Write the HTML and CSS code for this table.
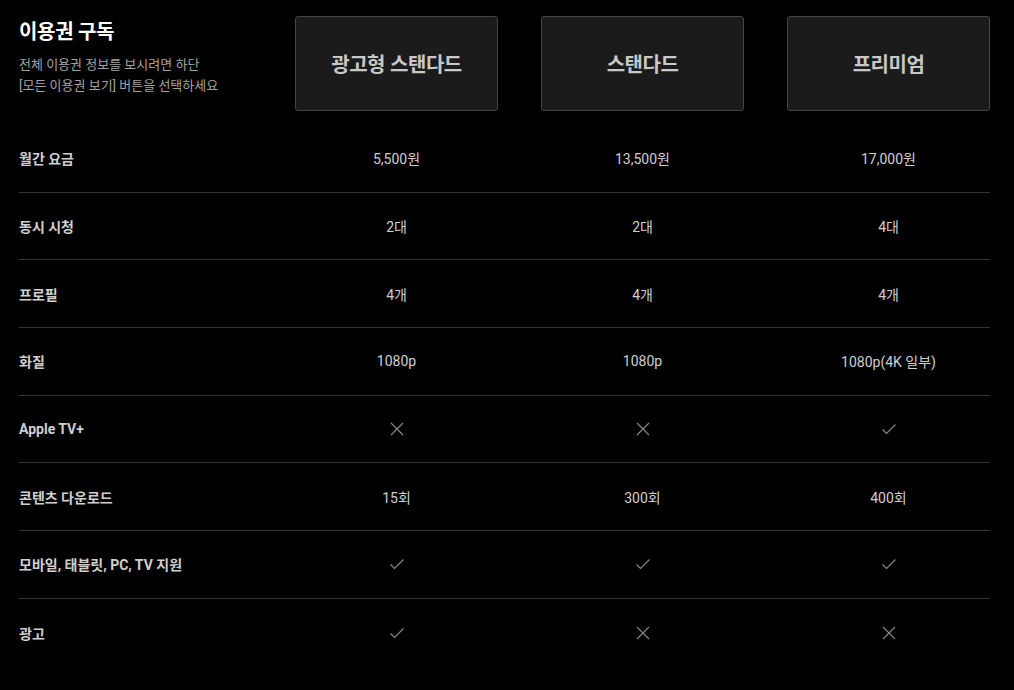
FILE: index.html
```
<!DOCTYPE html>
<html lang="ko">
<head>
    <meta charset="UTF-8">
    <meta name="viewport" content="width=device-width, initial-scale=1.0">
    <title>이용권 구독</title>
    <link rel="stylesheet" href="styles.css">
</head>
<body>
    <main class="plans">
        <div class="plans-head">
            <div class="plans-intro">
                <h1>이용권 구독</h1>
                <p>전체 이용권 정보를 보시려면 하단<br>[모든 이용권 보기] 버튼을 선택하세요</p>
            </div>
            <div class="plan-box">광고형 스탠다드</div>
            <div class="plan-box">스탠다드</div>
            <div class="plan-box">프리미엄</div>
        </div>

        <div class="plan-row">
            <div class="row-label">월간 요금</div>
            <div class="row-cell">5,500원</div>
            <div class="row-cell">13,500원</div>
            <div class="row-cell">17,000원</div>
        </div>
        <div class="plan-row">
            <div class="row-label">동시 시청</div>
            <div class="row-cell">2대</div>
            <div class="row-cell">2대</div>
            <div class="row-cell">4대</div>
        </div>
        <div class="plan-row">
            <div class="row-label">프로필</div>
            <div class="row-cell">4개</div>
            <div class="row-cell">4개</div>
            <div class="row-cell">4개</div>
        </div>
        <div class="plan-row">
            <div class="row-label">화질</div>
            <div class="row-cell">1080p</div>
            <div class="row-cell">1080p</div>
            <div class="row-cell">1080p(4K 일부)</div>
        </div>
        <div class="plan-row">
            <div class="row-label">Apple TV+</div>
            <div class="row-cell"><svg class="icon" viewBox="0 0 14 14"><path d="M1 1L13 13M13 1L1 13"/></svg></div>
            <div class="row-cell"><svg class="icon" viewBox="0 0 14 14"><path d="M1 1L13 13M13 1L1 13"/></svg></div>
            <div class="row-cell"><svg class="icon" viewBox="0 0 14 14"><path d="M0.5 7.5L4.5 11.5L13.5 2.5"/></svg></div>
        </div>
        <div class="plan-row">
            <div class="row-label">콘텐츠 다운로드</div>
            <div class="row-cell">15회</div>
            <div class="row-cell">300회</div>
            <div class="row-cell">400회</div>
        </div>
        <div class="plan-row">
            <div class="row-label">모바일, 태블릿, PC, TV 지원</div>
            <div class="row-cell"><svg class="icon" viewBox="0 0 14 14"><path d="M0.5 7.5L4.5 11.5L13.5 2.5"/></svg></div>
            <div class="row-cell"><svg class="icon" viewBox="0 0 14 14"><path d="M0.5 7.5L4.5 11.5L13.5 2.5"/></svg></div>
            <div class="row-cell"><svg class="icon" viewBox="0 0 14 14"><path d="M0.5 7.5L4.5 11.5L13.5 2.5"/></svg></div>
        </div>
        <div class="plan-row last">
            <div class="row-label">광고</div>
            <div class="row-cell"><svg class="icon" viewBox="0 0 14 14"><path d="M0.5 7.5L4.5 11.5L13.5 2.5"/></svg></div>
            <div class="row-cell"><svg class="icon" viewBox="0 0 14 14"><path d="M1 1L13 13M13 1L1 13"/></svg></div>
            <div class="row-cell"><svg class="icon" viewBox="0 0 14 14"><path d="M1 1L13 13M13 1L1 13"/></svg></div>
        </div>
    </main>
</body>
</html>
```

FILE: styles.css
```
:root {
    --color-bg: #000;
    --color-box: #1b1b1b;
    --color-box-border: #454545;
    --color-line: #333;
    --color-text: #cfcfcf;
    --color-muted: #a3a3a3;
    --color-icon: #8a8a8a;
}
* { box-sizing: border-box; margin: 0; padding: 0; }
body { background: var(--color-bg); color: var(--color-text); font-family: Roboto, 'Noto Sans CJK KR', sans-serif; }
.plans { width: 1014px; padding: 16px 24px 0 19px; }
.plans-head, .plan-row { display: grid; grid-template-columns: 233px repeat(3, 203px); column-gap: 43px; }
.plans-head { margin-bottom: 14px; }
.plans-intro h1 { font-size: 20px; font-weight: 700; color: #fff; line-height: 30px; margin-top: 1px; letter-spacing: -0.3px; }
.plans-intro p { font-size: 13px; color: var(--color-muted); line-height: 21px; margin-top: 7px; }
.plan-box { height: 95px; display: flex; align-items: center; justify-content: center; background: var(--color-box); border: 1px solid var(--color-box-border); border-radius: 3px; font-family: 'Noto Sans CJK KR', sans-serif; font-size: 20px; font-weight: 700; color: #c8c8c8; letter-spacing: -0.5px; }
.plan-row { height: 67.7px; align-items: center; border-bottom: 1px solid var(--color-line); }
.plan-row.last { border-bottom: none; }
.row-label { font-size: 14px; font-weight: 700; color: var(--color-text); }
.row-cell { font-size: 14px; text-align: center; color: var(--color-text); display: flex; justify-content: center; align-items: center; }
.icon { width: 14px; height: 14px; fill: none; stroke: var(--color-icon); stroke-width: 1.1; }
```
